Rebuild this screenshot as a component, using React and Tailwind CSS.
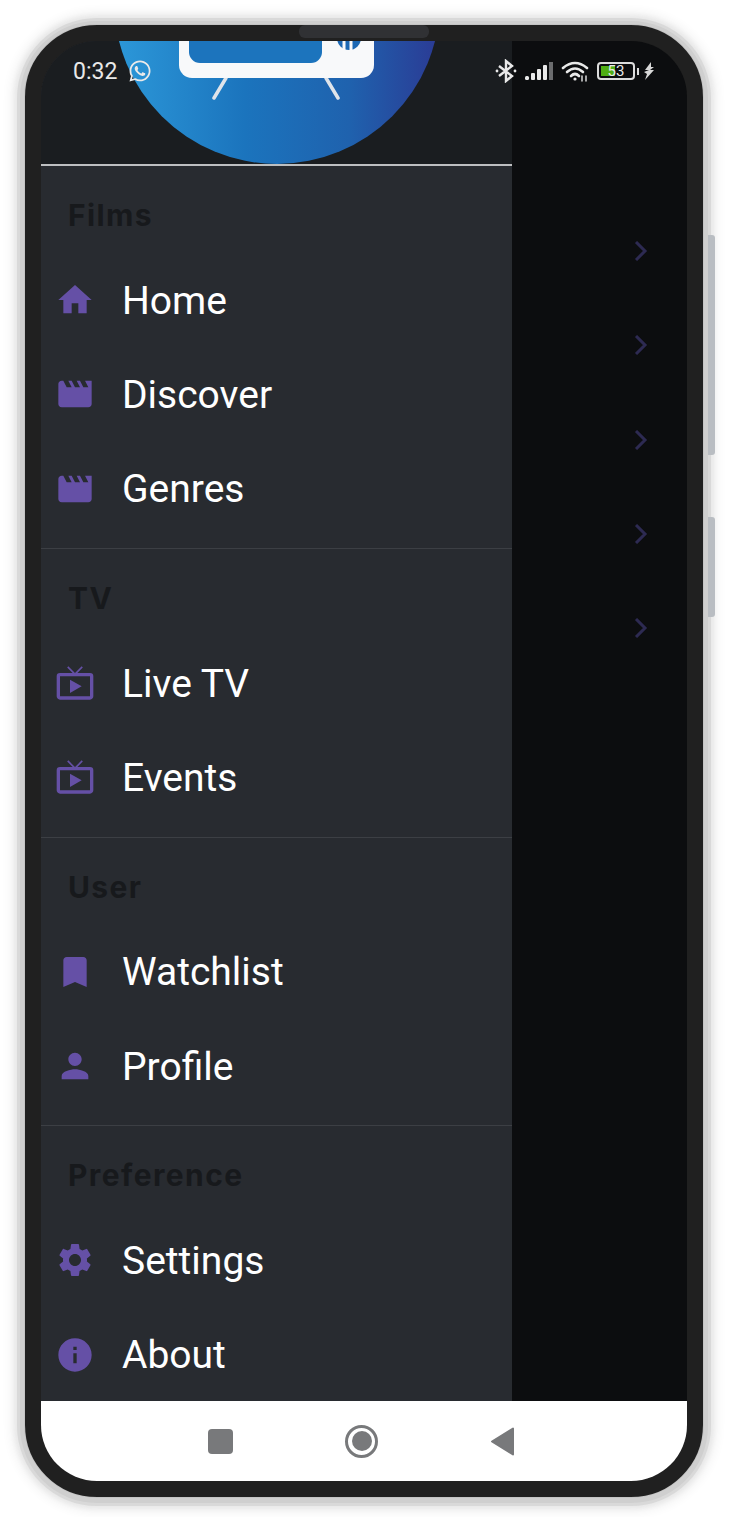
import { FaWhatsapp } from 'react-icons/fa'
import { MdBookmark, MdHome, MdInfo, MdLiveTv, MdMovie, MdPerson, MdSettings } from 'react-icons/md'

const sections = [
  {
    title: 'Films',
    items: [
      { label: 'Home', icon: MdHome },
      { label: 'Discover', icon: MdMovie },
      { label: 'Genres', icon: MdMovie },
    ],
  },
  {
    title: 'TV',
    items: [
      { label: 'Live TV', icon: MdLiveTv },
      { label: 'Events', icon: MdLiveTv },
    ],
  },
  {
    title: 'User',
    items: [
      { label: 'Watchlist', icon: MdBookmark },
      { label: 'Profile', icon: MdPerson },
    ],
  },
  {
    title: 'Preference',
    items: [
      { label: 'Settings', icon: MdSettings },
      { label: 'About', icon: MdInfo },
    ],
  },
]

function Logo() {
  return (
    <svg width="326" height="326" viewBox="0 0 326 326" className="shrink-0">
      <defs>
        <linearGradient id="logoFill" x1="0" y1="0" x2="1" y2="0">
          <stop offset="0" stopColor="#2c98d9" />
          <stop offset="0.4" stopColor="#1b74bd" />
          <stop offset="0.72" stopColor="#1f62ae" />
          <stop offset="1" stopColor="#2b3a94" />
        </linearGradient>
      </defs>
      <circle cx="163" cy="163" r="163" fill="url(#logoFill)" />
      <path d="M112 240 L100 260 M212 240 L224 260" stroke="#dfe4ea" strokeWidth="3.5" strokeLinecap="round" />
      <rect x="65" y="100" width="195" height="140" rx="13" fill="#f8f9fa" />
      <rect x="75" y="100" width="133" height="125" rx="11" fill="#1c74bd" />
      <circle cx="235" cy="200" r="12" fill="#1c68b4" />
      <path d="M230 200 V214 M237 200 V214" stroke="#f8f9fa" strokeWidth="3" />
    </svg>
  )
}

function StatusBar() {
  return (
    <div className="absolute inset-x-0 top-0 flex h-[60px] items-center justify-between pl-[32px] pr-[32px] text-[#e9e9e9]">
      <div className="flex items-center gap-[11px]">
        <span className="text-[23px] font-['Roboto',sans-serif] leading-none">0:32</span>
        <FaWhatsapp size={24} />
      </div>
      <div className="flex items-center">
        <svg width="22" height="24" viewBox="0 0 22 24" fill="none" stroke="#e9e9e9" strokeWidth="2.4">
          <path d="M4 7 L17 17 L11 22 V2 L17 7 L4 17" />
          <circle cx="2" cy="12" r="1.4" fill="#e9e9e9" stroke="none" />
          <circle cx="20" cy="12" r="1.4" fill="#e9e9e9" stroke="none" />
        </svg>
        <svg width="29" height="20" viewBox="0 0 29 20" className="ml-[8px]">
          <rect x="0" y="15" width="4" height="4" rx="1.5" fill="#e9e9e9" />
          <rect x="6" y="12" width="4" height="7" rx="1" fill="#e9e9e9" />
          <rect x="12" y="8" width="4" height="11" rx="1" fill="#e9e9e9" />
          <rect x="18" y="4" width="4" height="15" rx="1" fill="#e9e9e9" />
          <rect x="24" y="1" width="4" height="18" fill="#6b6c6e" />
        </svg>
        <svg width="28" height="22" viewBox="0 0 28 22" fill="none" stroke="#e9e9e9" strokeWidth="2.6" strokeLinecap="round" className="ml-[7px]">
          <path d="M2 8 Q14 -2 26 8" />
          <path d="M6 12 Q14 5 22 12" />
          <path d="M10 16 Q14 12 18 16" />
          <circle cx="14" cy="19" r="1.6" fill="#e9e9e9" stroke="none" />
          <path d="M21 16 V21 M25 16 V21" strokeWidth="1.4" />
        </svg>
        <div className="ml-[8px] flex items-center">
          <div className="relative flex h-[18px] w-[38px] items-center rounded-[4px] border-2 border-[#dcdcdc] p-[2px]">
            <div className="h-full w-[47%] bg-[#4fae14]" />
            <span className="absolute inset-0 text-center text-[15px] leading-[14px] font-['Roboto',sans-serif] text-[#e9e9e9]">53</span>
          </div>
          <div className="ml-[2px] h-[7px] w-[2px] bg-[#dcdcdc]" />
        </div>
        <svg width="11" height="18" viewBox="0 0 11 18" className="ml-[5px]">
          <path d="M7 0 L1 8 H5 L0 10 L3 12 L1 18 L10 8 H6 L10 5 H7 Z" fill="#d8d8d8" />
        </svg>
      </div>
    </div>
  )
}

function Drawer() {
  return (
    <aside className="flex h-full w-[471px] shrink-0 flex-col overflow-hidden bg-[#282b30]">
      <div className="flex h-[123px] shrink-0 items-end justify-center overflow-hidden bg-[#1a1d20]">
        <Logo />
      </div>
      <div className="h-[2px] shrink-0 bg-[#bdbfc1]" />
      {sections.map((section, i) => (
        <section key={section.title} className={i < sections.length - 1 ? 'border-b border-[#3c3f44] pb-[12px]' : ''}>
          <div className="flex h-[87px] items-start pl-[27px] pt-[30px]">
            <h3 className="text-[30px] leading-[39px] font-bold tracking-[1.4px] font-['Inter',sans-serif] text-[#17191c]">{section.title}</h3>
          </div>
          {section.items.map((item) => {
            const Icon = item.icon
            return (
              <div key={item.label} className="flex h-[94.33px] items-center gap-[27px] pl-[14px]">
                <Icon size={40} className="shrink-0 text-[#6550a6]" />
                <span className="pt-[2px] text-[39px] leading-none font-['Roboto',sans-serif] text-white">{item.label}</span>
              </div>
            )
          })}
        </section>
      ))}
    </aside>
  )
}

function Backdrop() {
  return (
    <div className="flex h-full flex-1 flex-col items-end gap-[74.33px] bg-[#0c0d0f] pr-[39px] pt-[200px]">
      {[0, 1, 2, 3, 4].map((n) => (
        <svg key={n} width="14" height="20" viewBox="0 0 14 20" fill="none" stroke="#2d2a52" strokeWidth="3" className="shrink-0">
          <path d="M2 1 L11 10 L2 19" />
        </svg>
      ))}
    </div>
  )
}

function NavBar() {
  return (
    <div className="flex h-[80px] shrink-0 items-center justify-center bg-white pr-[5px]">
      <div className="flex w-[141px] justify-center">
        <div className="h-[25px] w-[25px] rounded-[4px] bg-[#78797b]" />
      </div>
      <div className="flex w-[141px] justify-center">
        <div className="flex h-[33px] w-[33px] items-center justify-center rounded-full border-[3px] border-[#78797b]">
          <div className="h-[20px] w-[20px] rounded-full bg-[#78797b]" />
        </div>
      </div>
      <div className="flex w-[141px] justify-center">
        <svg width="24" height="29" viewBox="0 0 24 29">
          <path d="M22 1.5 V27.5 L1 14.5 Z" fill="#78797b" stroke="#78797b" strokeWidth="2" strokeLinejoin="round" />
        </svg>
      </div>
    </div>
  )
}

export default function App() {
  return (
    <div className="h-[1517px] w-[732px] overflow-hidden bg-white pl-[25px] pt-[25px]">
      <div className="relative h-[1472px] w-[678px] rounded-[72px] shadow-[0_0_0_1px_#c4c4c4,0_1px_0_5px_#cfcfcf,0_1px_0_8px_#d9d9d9,0_1px_4px_11px_#e8e8e8,0_1px_8px_16px_#f6f6f6]">
        {/* side buttons */}
        <div className="absolute left-[683px] top-[210px] h-[220px] w-[7px] rounded-r-[3px] bg-[#b9bdc2]" />
        <div className="absolute left-[683px] top-[492px] h-[100px] w-[7px] rounded-r-[3px] bg-[#b9bdc2]" />

        <div className="flex h-full w-full flex-col overflow-hidden rounded-[72px] border-[16px] border-[#202020] bg-[#202020]">
          <div className="relative flex min-h-0 flex-1 overflow-hidden">
            <Drawer />
            <Backdrop />
            <StatusBar />
          </div>
          <NavBar />
        </div>

        {/* speaker notch */}
        <div className="absolute left-[274px] top-0 h-[13px] w-[130px] rounded-[6px] bg-[#303134]" />
      </div>
    </div>
  )
}
